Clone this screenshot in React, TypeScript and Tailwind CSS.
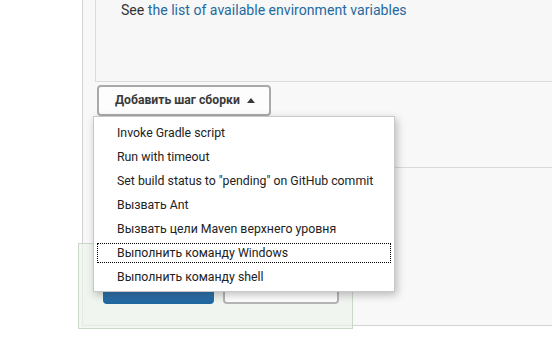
import React from "react";

const items = [
  "Invoke Gradle script",
  "Run with timeout",
  'Set build status to "pending" on GitHub commit',
  "Вызвать Ant",
  "Вызвать цели Maven верхнего уровня",
  "Выполнить команду Windows",
  "Выполнить команду shell",
];

export default function App() {
  return (
    <div
      className="relative w-[552px] h-[358px] overflow-hidden bg-white text-[#333]"
      style={{ fontFamily: 'Roboto, "Noto Sans", sans-serif' }}
    >
      <div className="flex h-[326px]">
        <div className="w-[82px] shrink-0 bg-white" />
        <div className="flex-1 flex flex-col border-l border-b border-[#d3d3d3] bg-[#f8f8f8]">
          <div className="ml-[12px] h-[82px] border-l border-b border-[#dcdcdc] bg-[#f7f7f7] pl-[25px] pt-0">
            <div className="text-[14.1px] leading-[20px] text-[#333] whitespace-nowrap">
              See <span className="text-[#1f6aa0]">the list of available environment variables</span>
            </div>
          </div>
          <div className="ml-[14px] mt-[3px]">
            <button className="h-[31px] w-[174px] rounded-[4px] border-2 border-[#a9a9a9] bg-[#fdfdfd] flex items-center pl-[16px] text-[12.2px] font-bold text-[#3a3a3a] whitespace-nowrap">
              Добавить шаг сборки
              <svg width="8" height="5" viewBox="0 0 8 5" className="ml-[7px]">
                <path d="M0 5 L4 0 L8 5 Z" fill="#3a3a3a" />
              </svg>
            </button>
          </div>
          <div className="ml-[12px] mt-[51px] border-b border-[#dadada]" />
        </div>
      </div>

      <div className="absolute left-[78px] top-[243px] w-[275px] h-[86px] border border-[#c9d8c9] bg-[#eef4ec]/70">
        <div className="flex gap-[9px] pl-[24px] pt-[29px]">
          <div className="w-[111px] h-[31px] rounded-[4px] bg-gradient-to-b from-[#4a8cc4] to-[#1f669f]" />
          <div className="w-[116px] h-[31px] rounded-[4px] border-2 border-[#b5b5b5] bg-white" />
        </div>
      </div>

      <div className="absolute left-[93px] top-[116px] w-[302px] bg-white border border-[#c8c8c8] shadow-[2px_3px_8px_rgba(0,0,0,0.25)] pt-[4px] pb-[2px]">
        {items.map((t, i) => (
          <div key={i} className="h-[24px] px-[3px] flex items-center">
            <div
              className={
                "w-full h-[20px] flex items-center pl-[19px] text-[12.3px] text-[#222] border whitespace-nowrap " +
                (i === 5 ? "border-dotted border-black" : "border-transparent")
              }
            >
              {t}
            </div>
          </div>
        ))}
      </div>
    </div>
  );
}
